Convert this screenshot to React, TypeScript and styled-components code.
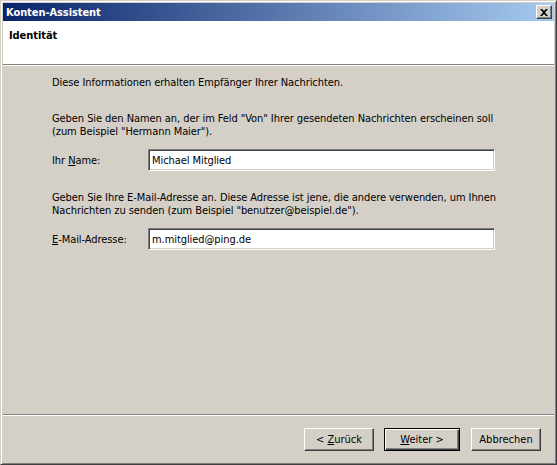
import React from 'react'
import styled, { createGlobalStyle } from 'styled-components'

const GlobalStyle = createGlobalStyle`
  html, body {
    margin: 0;
    padding: 0;
    background: #d4d0c8;
  }
  * {
    box-sizing: border-box;
  }
`

const face = '"DejaVu Sans Condensed", "Liberation Sans", Arial, sans-serif'

const Window = styled.div`
  width: 557px;
  height: 465px;
  display: flex;
  flex-direction: column;
  background: #d4d0c8;
  border: 1px solid;
  border-color: #d4d0c8 #404040 #404040 #d4d0c8;
  box-shadow: inset 1px 1px 0 #ffffff, inset -1px -1px 0 #808080;
  padding: 2px;
  font-family: ${face};
  font-size: 11px;
  letter-spacing: -0.07px;
  color: #000;
`

const TitleBar = styled.div`
  height: 18px;
  display: flex;
  align-items: center;
  justify-content: space-between;
  padding: 0 2px 0 2px;
  background: linear-gradient(to right, #0a246a, #a6caf0);
`

const Title = styled.span`
  color: #fff;
  font-weight: bold;
  padding-left: 1px;
`

const CloseButton = styled.button`
  width: 16px;
  height: 14px;
  padding: 0;
  margin: 0;
  display: flex;
  align-items: center;
  justify-content: center;
  background: #d4d0c8;
  border: 1px solid;
  border-color: #ffffff #404040 #404040 #ffffff;
  box-shadow: inset -1px -1px 0 #808080;
`

const Header = styled.div`
  height: 44px;
  background: #fff;
  padding: 8px 0 0 6px;
  border-bottom: 1px solid #808080;
  box-shadow: 0 1px 0 #ffffff;
  font-weight: bold;
  margin-bottom: 1px;
`

const Body = styled.div`
  flex: 1;
  padding: 10px 20px 0 49px;
  line-height: 13px;
`

const Para = styled.p<{ $gap: number }>`
  margin: 0;
  margin-top: ${(p) => p.$gap}px;
`

const FieldRow = styled.div`
  display: grid;
  grid-template-columns: 96px 347px;
  align-items: center;
  margin-top: 11px;
`

const Key = styled.span`
  text-decoration: underline;
`

const Input = styled.input`
  height: 22px;
  width: 100%;
  font-family: ${face};
  font-size: 11px;
  letter-spacing: -0.07px;
  padding: 0 0 0 3px;
  background: #fff;
  border: 1px solid;
  border-color: #808080 #ffffff #ffffff #808080;
  box-shadow: inset 1px 1px 0 #404040, inset -1px -1px 0 #d4d0c8;
  outline: none;
`

const Footer = styled.div`
  border-top: 1px solid #808080;
  box-shadow: inset 0 1px 0 #ffffff;
  display: flex;
  justify-content: flex-end;
  padding: 13px 13px 11px 0;
`

const Button = styled.button<{ $default?: boolean; $w: number }>`
  width: ${(p) => p.$w}px;
  height: 23px;
  margin-left: ${(p) => (p.$default ? 10 : 11)}px;
  font-family: ${face};
  font-size: 11px;
  color: #000;
  background: #d4d0c8;
  padding: 0;
  border: 1px solid;
  border-color: ${(p) => (p.$default ? '#000' : '#ffffff #404040 #404040 #ffffff')};
  box-shadow: ${(p) =>
    p.$default
      ? 'inset 1px 1px 0 #ffffff, inset -1px -1px 0 #404040, inset -2px -2px 0 #808080'
      : 'inset -1px -1px 0 #808080'};
`

export default function App() {
  return (
    <>
      <GlobalStyle />
      <Window>
        <TitleBar>
          <Title>Konten-Assistent</Title>
          <CloseButton>
            <svg width="8" height="7" viewBox="0 0 8 7">
              <path d="M0 0h2l2 2 2-2h2L5 3.5 8 7H6L4 5 2 7H0l3-3.5z" fill="#000" />
            </svg>
          </CloseButton>
        </TitleBar>
        <Header>Identität</Header>
        <Body>
          <Para $gap={0}>Diese Informationen erhalten Empfänger Ihrer Nachrichten.</Para>
          <Para $gap={23}>
            Geben Sie den Namen an, der im Feld "Von" Ihrer gesendeten Nachrichten erscheinen soll
            <br />
            (zum Beispiel "Hermann Maier").
          </Para>
          <FieldRow>
            <span>
              Ihr <Key>N</Key>ame:
            </span>
            <Input defaultValue="Michael Mitglied" />
          </FieldRow>
          <Para $gap={20}>
            Geben Sie Ihre E-Mail-Adresse an. Diese Adresse ist jene, die andere verwenden, um Ihnen
            <br />
            Nachrichten zu senden (zum Beispiel "benutzer@beispiel.de").
          </Para>
          <FieldRow>
            <span>
              <Key>E</Key>-Mail-Adresse:
            </span>
            <Input defaultValue="m.mitglied@ping.de" />
          </FieldRow>
        </Body>
        <Footer>
          <Button $w={70}>
            &lt; <Key>Z</Key>urück
          </Button>
          <Button $w={76} $default>
            <Key>W</Key>eiter &gt;
          </Button>
          <Button $w={70}>Abbrechen</Button>
        </Footer>
      </Window>
    </>
  )
}
